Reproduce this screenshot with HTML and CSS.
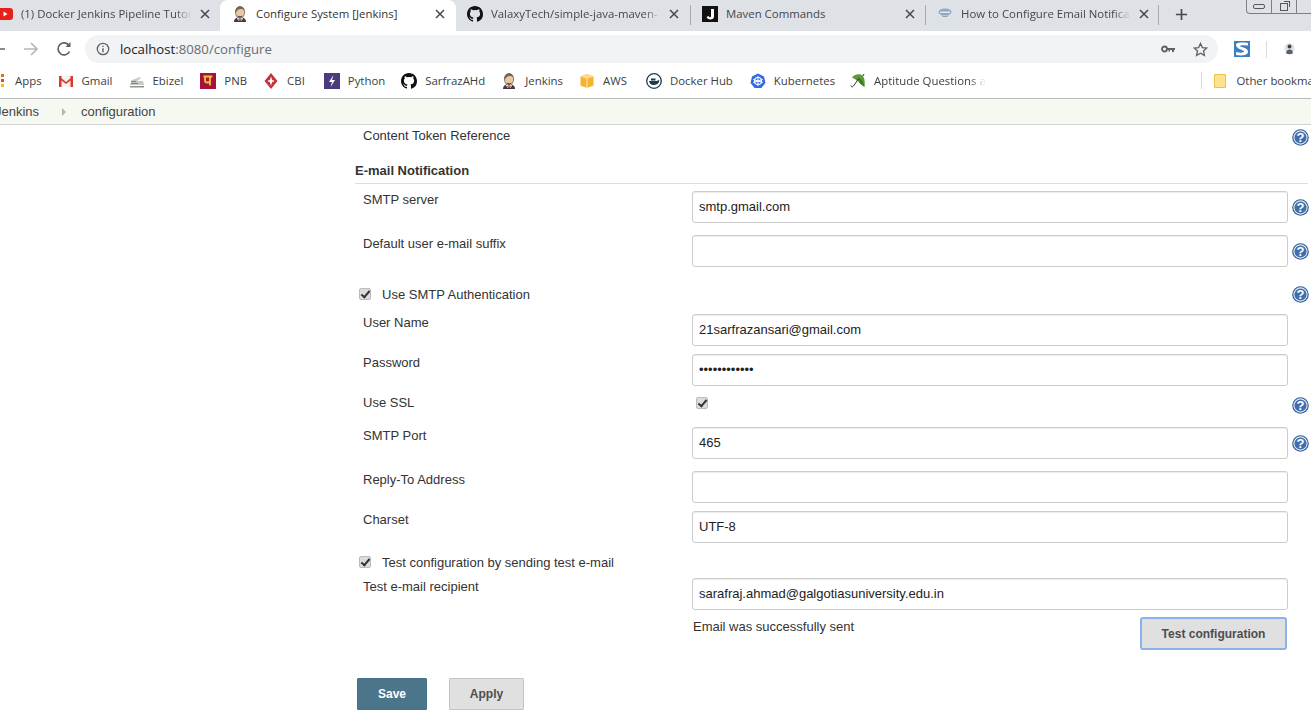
FILE: index.html
```html
<!DOCTYPE html>
<html lang="en">
<head>
    <meta charset="UTF-8">
    <meta name="viewport" content="width=device-width, initial-scale=1.0">
    <title>Configure System [Jenkins]</title>
    <link rel="stylesheet" href="styles.css">
</head>
<body>
    <svg class="defs" width="0" height="0">
        <symbol id="i-github" viewBox="0 0 16 16">
            <path fill="#111" d="M8 0C3.58 0 0 3.58 0 8c0 3.54 2.29 6.53 5.47 7.59.4.07.55-.17.55-.38v-1.34c-2.23.48-2.7-1.07-2.7-1.07-.36-.92-.89-1.17-.89-1.17-.73-.5.05-.49.05-.49.8.06 1.23.83 1.23.83.71 1.22 1.87.87 2.33.66.07-.52.28-.87.51-1.07-1.78-.2-3.64-.89-3.64-3.95 0-.87.31-1.59.82-2.15-.08-.2-.36-1.02.08-2.12 0 0 .67-.21 2.2.82A7.6 7.6 0 0 1 8 3.9c.68 0 1.36.09 2 .27 1.53-1.04 2.2-.82 2.2-.82.44 1.1.16 1.92.08 2.12.51.56.82 1.27.82 2.15 0 3.07-1.87 3.75-3.65 3.95.29.25.54.73.54 1.48v2.2c0 .21.15.46.55.38A8 8 0 0 0 16 8c0-4.42-3.58-8-8-8z"/>
        </symbol>
        <symbol id="i-jenkins" viewBox="0 0 16 16">
            <path fill="#3d3a3a" d="M2 16c0-2.500 1.500-4 3.500-4.500h5c2 .5 3.500 2 3.500 4.500z"/>
            <path fill="#e9c9a6" stroke="#5b4a3e" stroke-width=".7" d="M3.500 6c0-3.500 2-5.500 4.500-5.500S12.500 2.500 12.500 6c0 3.500-2 6.500-4.500 6.500S3.500 9.500 3.500 6z"/>
            <path fill="#6e665f" d="M3.500 6.500C3 3 5.500.4 8 .4c2.300 0 4 1.300 4.500 3.600-2.500-1.500-5-1.500-6.800 0-.7.8-.9 1.800-2.200 2.500z"/>
            <path fill="#5b4a3e" d="M5.500 9.500c1.500 1 3.500 1 5 0-.3 1.600-1.300 2.500-2.500 2.500s-2.200-.9-2.500-2.500z"/>
            <path fill="#fff" d="M4.800 12.300l1.700 2.700 1.500-1.300 1.500 1.300 1.700-2.700-1.700-.3-1.500.9-1.500-.9z"/>
            <path fill="#b3262a" d="M6.300 12.700l1.700.8 1.700-.8v1.800L8 13.800l-1.700.7z"/>
        </symbol>
        <symbol id="i-help" viewBox="0 0 17 17">
            <circle cx="8.500" cy="8.500" r="8.300" fill="#2c5c98"/>
            <circle cx="8.500" cy="8.500" r="6.600" fill="#3f6fab" stroke="#e3ebf5" stroke-width="1.100"/>
            <text x="8.500" y="13" text-anchor="middle" class="help-mark">?</text>
        </symbol>
        <symbol id="i-close" viewBox="0 0 10 10">
            <path stroke="#45474a" stroke-width="1.500" d="M1 1l8 8M9 1l-8 8"/>
        </symbol>
    </svg>

    <div class="tabstrip">
        <div class="tab tab-first">
            <svg class="favicon" viewBox="0 0 16 16"><rect y="2" width="16" height="12" rx="3" fill="#e62117"/><path fill="#fff" d="M6.500 5.500v5l4-2.500z"/></svg>
            <span class="tab-title">(1) Docker Jenkins Pipeline Tutor</span>
            <svg class="tab-close"><use href="#i-close"/></svg>
        </div>
        <div class="tab tab-active">
            <svg class="favicon"><use href="#i-jenkins"/></svg>
            <span class="tab-title">Configure System [Jenkins]</span>
            <svg class="tab-close"><use href="#i-close"/></svg>
        </div>
        <div class="tab tab-third">
            <svg class="favicon"><use href="#i-github"/></svg>
            <span class="tab-title">ValaxyTech/simple-java-maven-</span>
            <svg class="tab-close"><use href="#i-close"/></svg>
        </div>
        <div class="tab tab-fourth">
            <span class="tab-sep"></span>
            <svg class="favicon" viewBox="0 0 16 16"><rect width="16" height="16" fill="#111"/><path fill="#fff" d="M9 3h3v7.500c0 2-1.500 3-3.500 3S5 12.500 4.500 11l2.300-1c.2.800.7 1.300 1.300 1.300.6 0 .9-.4.900-1.100z"/></svg>
            <span class="tab-title">Maven Commands</span>
            <svg class="tab-close"><use href="#i-close"/></svg>
        </div>
        <div class="tab tab-last">
            <span class="tab-sep"></span>
            <svg class="favicon" viewBox="0 0 16 16"><ellipse cx="8" cy="6" rx="6.500" ry="3.500" fill="#8fa9c4"/><path fill="#dfe6ee" d="M3 5.500h10v1.500H3z"/><path fill="#7b8fa5" d="M4 9c2 1.500 6 1.500 8 0-1 2.500-7 2.500-8 0z"/></svg>
            <span class="tab-title">How to Configure Email Notifica</span>
            <svg class="tab-close"><use href="#i-close"/></svg>
            <span class="tab-sep tab-sep-end"></span>
        </div>
        <svg class="new-tab" viewBox="0 0 14 14"><path stroke="#45474a" stroke-width="1.800" d="M7 1v12M1 7h12"/></svg>
        <div class="win-buttons">
            <span class="win-btn"><i class="win-min"></i></span>
            <span class="win-btn"><i class="win-max"></i></span>
            <span class="win-btn win-btn-end"></span>
        </div>
    </div>

    <div class="toolbar">
        <svg class="nav-icon nav-back" viewBox="0 0 16 16"><path stroke="#5f6368" stroke-width="1.700" fill="none" d="M15 8H2M8 2L2 8l6 6"/></svg>
        <svg class="nav-icon nav-forward" viewBox="0 0 16 16"><path stroke="#b4b6b9" stroke-width="1.700" fill="none" d="M1 8h13M8 2l6 6-6 6"/></svg>
        <svg class="nav-icon" viewBox="0 0 16 16"><path stroke="#5f6368" stroke-width="1.700" fill="none" d="M13.500 10.500A6 6 0 1 1 13 4.500"/><path fill="#5f6368" d="M14.500 1v5h-5z"/></svg>
        <div class="omnibox">
            <svg class="omni-info" viewBox="0 0 14 14"><circle cx="7" cy="7" r="5.700" fill="none" stroke="#5f6368" stroke-width="1.300"/><path fill="#5f6368" d="M6.300 6.200h1.400v4H6.300zM6.300 3.700h1.400v1.400H6.300z"/></svg>
            <span class="url"><b>localhost</b>:8080/configure</span>
            <svg class="omni-key" viewBox="0 0 14 8"><circle cx="3.500" cy="4" r="2.500" fill="none" stroke="#5f6368" stroke-width="1.800"/><path fill="#5f6368" d="M6 3h8v2h-1v2h-2V5H9v1.500H7.500V5H6z"/></svg>
            <svg class="omni-star" viewBox="0 0 16 16"><path fill="none" stroke="#5f6368" stroke-width="1.400" d="M8 1.500l2 4.400 4.700.5-3.500 3.200 1 4.700L8 11.900l-4.200 2.400 1-4.700L1.300 6.400 6 5.900z"/></svg>
        </div>
        <svg class="ext-s" viewBox="0 0 16 16"><rect width="16" height="16" fill="#3a7fc0"/><path fill="#fff" d="M2 4c0-2 3-3 12-2v2.500C9 4 6 4 6 5c0 1.500 8 1 8 6 0 3-5 4-12 3v-3c4 1 8 1 8-.5S2 8 2 4z"/></svg>
        <span class="toolbar-sep"></span>
        <svg class="avatar" viewBox="0 0 12 14"><circle cx="6" cy="6" r="6" fill="#dde3ea"/><circle cx="6" cy="4" r="2.300" fill="#4a3c3c"/><path fill="#5d6066" d="M2 12c0-3 1.500-4.500 4-4.500s4 1.500 4 4.500c-2 1.500-6 1.500-8 0z"/></svg>
    </div>

    <div class="bookmarks">
        <span class="apps-dots"></span>
        <span class="bm">Apps</span>
        <span class="bm">
            <svg class="bm-icon" viewBox="0 0 16 16"><path fill="#f3f3f3" d="M1 3h14v11H1z"/><path fill="#d93a2e" d="M1 3h2.500v11H1zM12.500 3H15v11h-2.500zM1 3l7 6 7-6v2.500L8 11 1 5.500z"/></svg>
            Gmail
        </span>
        <span class="bm">
            <svg class="bm-icon" viewBox="0 0 16 16"><path fill="#c6cbc6" d="M1 12l2-5 8-3 1 1-4 3h6l1 4z"/><path fill="#7e837f" d="M2 8h5v1H2zM2 10h7v1H2z"/><path fill="#8f948f" d="M1 13h14v1.500H1z"/></svg>
            Ebizel
        </span>
        <span class="bm bm-pnb">
            <svg class="bm-icon" viewBox="0 0 16 16"><rect width="16" height="16" fill="#a5123f"/><path fill="none" stroke="#f5c42c" stroke-width="1.800" d="M3.500 3.500h9M5 3.500v4c0 1.500 1 2 2.500 2s2.500-.5 2.500-2v-4M10 6.500v6"/></svg>
            PNB
        </span>
        <span class="bm">
            <svg class="bm-icon" viewBox="0 0 16 16"><path fill="#c1363e" d="M8 0l6.500 8L8 16 1.500 8z"/><path fill="#fff" d="M8 3.500L9.500 8 8 12.500 6.500 8z"/><path fill="#fff" d="M5 7.300h6v1.400H5z"/></svg>
            CBI
        </span>
        <span class="bm bm-python">
            <svg class="bm-icon" viewBox="0 0 16 16"><rect width="16" height="16" fill="#4b3a7d"/><path fill="#fff" d="M9.500 2L5 9h3l-1.500 5L11 7H8z"/></svg>
            Python
        </span>
        <span class="bm"><svg class="bm-icon"><use href="#i-github"/></svg>SarfrazAHd</span>
        <span class="bm"><svg class="bm-icon"><use href="#i-jenkins"/></svg>Jenkins</span>
        <span class="bm">
            <svg class="bm-icon" viewBox="0 0 16 16"><path fill="#f7b32b" d="M8 1l6.500 2.500v9L8 15l-6.500-2.500v-9z"/><path fill="#fbd98a" d="M8 1l6.500 2.500L8 6 1.500 3.500z"/><path fill="#fff" d="M7.600 6h.8v9h-.8z"/></svg>
            AWS
        </span>
        <span class="bm bm-docker">
            <svg class="bm-icon" viewBox="0 0 16 16"><circle cx="8" cy="8" r="7.300" fill="#fff" stroke="#1f3a4d" stroke-width="1.300"/><path fill="#1f3a4d" d="M3 8h8c.5-1 1.500-1 2.500-.5C13 10.500 10.500 12 7.500 12 5 12 3.500 10.500 3 8z"/><path fill="#1f3a4d" d="M5 5.500h4.500v2H5z"/></svg>
            Docker Hub
        </span>
        <span class="bm bm-kube">
            <svg class="bm-icon" viewBox="0 0 16 16"><path fill="#326ce5" d="M8 .5l6 2.900 1.500 6.500-4.100 5.200H4.600L.5 9.900 2 3.400z"/><circle cx="8" cy="8" r="3.500" fill="none" stroke="#fff" stroke-width="1.100"/><path stroke="#fff" stroke-width="1" d="M8 3v10M3.200 6.500l9.600 3M12.800 6.500l-9.600 3"/></svg>
            Kubernetes
        </span>
        <span class="bm">
            <svg class="bm-icon" viewBox="0 0 16 16"><path fill="#5f9a32" d="M2 4.500C5 .5 11 .5 13 3c2 3 2 7 1.500 11-1.500-2-3-3-4.500-3.500C8.500 8 5 6 2 4.500z"/><path fill="#3f7a20" d="M8 5l2 5.500 4.500 3.500C14 10 12 6 8 5z"/><path stroke="#333" stroke-width="1" fill="none" d="M9 5l-5.500 8c-1 1.500-2.500 1-2.500-.5M13 3l1-2"/></svg>
            <span class="bm-clip">Aptitude Questions a</span>
        </span>
        <span class="bm-right">
            <span class="toolbar-sep"></span>
            <svg class="folder" viewBox="0 0 12 14"><path fill="#fde28e" stroke="#efc04e" d="M.5.500h11v13H.5z"/></svg>
            Other bookmarks
        </span>
    </div>

    <div class="breadcrumbs">
        <span class="crumb">Jenkins</span>
        <span class="crumb-arrow"></span>
        <span class="crumb">configuration</span>
    </div>

    <form class="config">
        <div class="row row-token">
            <div class="label">Content Token Reference</div>
            <div></div>
            <svg class="help help-token"><use href="#i-help"/></svg>
        </div>

        <div class="section-head">E-mail Notification</div>

        <div class="row row-gap12">
            <label class="label">SMTP server</label>
            <input class="field" type="text" value="smtp.gmail.com">
            <svg class="help"><use href="#i-help"/></svg>
        </div>
        <div class="row row-gap12">
            <label class="label">Default user e-mail suffix</label>
            <input class="field" type="text">
            <svg class="help"><use href="#i-help"/></svg>
        </div>
        <div class="row row-check">
            <label class="check-label"><input class="check" type="checkbox" checked> Use SMTP Authentication</label>
            <svg class="help help-check"><use href="#i-help"/></svg>
        </div>
        <div class="row row-gap8">
            <label class="label">User Name</label>
            <input class="field" type="text" value="21sarfrazansari@gmail.com">
        </div>
        <div class="row">
            <label class="label">Password</label>
            <input class="field" type="password" value="abcdefghijkl">
        </div>
        <div class="row row-ssl">
            <label class="label">Use SSL</label>
            <div><input class="check check-ssl" type="checkbox" checked></div>
            <svg class="help help-ssl"><use href="#i-help"/></svg>
        </div>
        <div class="row row-gap12">
            <label class="label">SMTP Port</label>
            <input class="field" type="text" value="465">
            <svg class="help"><use href="#i-help"/></svg>
        </div>
        <div class="row row-gap8">
            <label class="label">Reply-To Address</label>
            <input class="field" type="text">
        </div>
        <div class="row">
            <label class="label">Charset</label>
            <input class="field" type="text" value="UTF-8">
        </div>
        <div class="row row-check row-check-test">
            <label class="check-label"><input class="check" type="checkbox" checked> Test configuration by sending test e-mail</label>
        </div>
        <div class="row row-gap7">
            <label class="label">Test e-mail recipient</label>
            <input class="field" type="text" value="sarafraj.ahmad@galgotiasuniversity.edu.in">
        </div>
        <div class="row">
            <div></div>
            <div class="test-status">
                <span class="status-text">Email was successfully sent</span>
                <button class="btn btn-test" type="button">Test configuration</button>
            </div>
        </div>
        <div class="actions">
            <button class="btn btn-save" type="button">Save</button>
            <button class="btn btn-apply" type="button">Apply</button>
        </div>
    </form>
</body>
</html>
```

FILE: styles.css
```css
html, body {
    margin: 0;
    height: 719px;
    overflow: hidden;
    background: #fff;
}
body {
    font-family: "Liberation Sans", Arial, sans-serif;
    font-size: 13px;
    color: #333;
}
.defs {
    display: block;
    height: 0;
}
.help-mark {
    font-family: "Liberation Sans", Arial, sans-serif;
    font-size: 13px;
    font-weight: bold;
    fill: #fff;
}

/* tabs */
.tabstrip {
    display: flex;
    align-items: flex-start;
    height: 31px;
    margin-left: -11px;
    background: #dee1e6;
    font-family: "Open Sans", "Noto Sans", sans-serif;
    font-size: 11.4px;
    color: #45474a;
    position: relative;
}
.tab {
    display: flex;
    align-items: center;
    box-sizing: border-box;
    width: 234px;
    height: 31px;
    padding: 0 11px 4px 11px;
    flex: none;
    position: relative;
}
.tab-first {
    width: 231px;
    padding-left: 8px;
    padding-right: 10px;
}
.tab-active {
    width: 236px;
    padding-left: 12px;
    background: #fff;
    border-radius: 8px 8px 0 0;
    color: #333;
}
.tab-fourth {
    width: 235px;
    padding: 0 10px 4px 12px;
}
.tab-last {
    padding: 0 10px 4px 12px;
}
.tab-sep {
    position: absolute;
    left: 0;
    top: 5px;
    width: 1px;
    height: 20px;
    background: #a6a9ad;
}
.tab-sep-end {
    left: auto;
    right: 0;
}
.favicon {
    width: 16px;
    height: 16px;
    flex: none;
    margin-right: 8px;
}
.tab-title {
    flex: 1;
    white-space: nowrap;
    overflow: hidden;
    -webkit-mask-image: linear-gradient(to right, #000 90%, transparent);
    mask-image: linear-gradient(to right, #000 90%, transparent);
}
.tab-active .tab-title,
.tab-fourth .tab-title {
    -webkit-mask-image: none;
    mask-image: none;
}
.tab-close {
    width: 10px;
    height: 10px;
    flex: none;
    margin-left: 8px;
}
.new-tab {
    width: 13px;
    height: 13px;
    margin: 8px 0 0 16px;
    flex: none;
}
.win-buttons {
    position: absolute;
    top: 0;
    right: 0;
    display: flex;
    height: 13px;
    border: 1px solid #7d7f83;
    border-top: none;
    border-right: none;
    border-radius: 0 0 0 4px;
}
.win-btn {
    display: flex;
    align-items: center;
    justify-content: center;
    width: 24px;
    border-right: 1px solid #7d7f83;
}
.win-btn-end {
    width: 14px;
    border-right: none;
}
.win-min {
    display: block;
    width: 10px;
    height: 3px;
    border: 1px solid #55575a;
    border-radius: 2px;
}
.win-max {
    display: block;
    width: 6px;
    height: 6px;
    border: 1px solid #55575a;
    box-shadow: 2px -2px 0 -1px #dee1e6, 3px -3px 0 -1px #55575a;
}

/* address bar */
.toolbar {
    display: flex;
    align-items: center;
    box-sizing: border-box;
    height: 32px;
    padding-top: 4px;
    background: #fff;
}
.nav-icon {
    width: 16px;
    height: 16px;
    flex: none;
    margin-right: 17px;
}
.nav-back {
    margin-left: -10px;
}
.omnibox {
    display: flex;
    align-items: center;
    width: 1133px;
    height: 28px;
    margin-left: -4px;
    padding-left: 11px;
    box-sizing: border-box;
    background: #f1f3f4;
    border-radius: 14px;
    flex: none;
}
.omni-info {
    width: 14px;
    height: 14px;
    margin-right: 10px;
}
.url {
    flex: 1;
    font-family: "Open Sans", "Noto Sans", sans-serif;
    font-size: 13.2px;
    color: #6a6d70;
}
.url b {
    font-weight: normal;
    color: #202124;
}
.omni-key {
    width: 14px;
    height: 8px;
    margin-right: 18px;
}
.omni-star {
    width: 15px;
    height: 15px;
    margin-right: 10px;
}
.ext-s {
    width: 16px;
    height: 16px;
    margin-left: 16px;
    flex: none;
}
.toolbar-sep {
    display: block;
    width: 1px;
    height: 17px;
    background: #d8dadd;
    margin-left: 16px;
    flex: none;
}
.avatar {
    width: 11px;
    height: 12px;
    margin-left: 17px;
    flex: none;
}

/* bookmarks */
.bookmarks {
    display: flex;
    align-items: center;
    height: 35px;
    border-bottom: 1px solid #b9b9b9;
    font-family: "Open Sans", "Noto Sans", sans-serif;
    font-size: 11.4px;
    color: #3c4043;
    white-space: nowrap;
    gap: 16px;
}
.apps-dots {
    display: block;
    width: 3px;
    height: 3px;
    margin: 0 -5px 0 1px;
    background: #ea4335;
    box-shadow: 0 5px 0 #fbbc05, 0 -5px 0 #e8710a;
    flex: none;
}
.bm {
    display: flex;
    align-items: center;
    gap: 8px;
    flex: none;
}
.bm-pnb {
    margin-left: 1px;
}
.bm-python {
    margin-left: 3px;
}
.bm-docker {
    margin-left: 3px;
}
.bm-kube {
    margin: 0 -1px 0 1px;
}
.bm-icon {
    width: 16px;
    height: 16px;
    flex: none;
}
.bm-clip {
    display: block;
    width: 112px;
    overflow: hidden;
    -webkit-mask-image: linear-gradient(to right, #000 85%, transparent);
    mask-image: linear-gradient(to right, #000 85%, transparent);
}
.bm-right {
    display: flex;
    align-items: center;
    margin-left: auto;
    margin-right: -19px;
    flex: none;
}
.bm-right .toolbar-sep {
    margin: 0 12px 0 0;
}
.folder {
    width: 12px;
    height: 14px;
    margin-right: 10px;
}

/* breadcrumb */
.breadcrumbs {
    display: flex;
    align-items: center;
    height: 25px;
    margin-left: -5px;
    background: #f6f9f2;
    border-bottom: 1px solid #d3d3d3;
    color: #444;
}
.crumb-arrow {
    width: 0;
    height: 0;
    margin: 0 15px 0 23px;
    border-left: 4px solid #b5b5b5;
    border-top: 4px solid transparent;
    border-bottom: 4px solid transparent;
}

/* form */
.config {
    padding: 2px 3px 0 355px;
}
.row {
    display: grid;
    grid-template-columns: 337px 596px 20px;
    align-items: start;
}
.row-gap12 {
    margin-bottom: 12px;
}
.row-gap8 {
    margin-bottom: 8px;
}
.row-gap7 {
    margin-bottom: 7px;
}
.row-token {
    height: 16px;
}
.label {
    padding: 1px 0 0 8px;
    line-height: 16px;
    display: block;
}
.section-head {
    margin: 19px 0 7px;
    height: 21px;
    line-height: 17px;
    border-bottom: 1px solid #ddd;
    font-weight: bold;
}
.field {
    box-sizing: border-box;
    width: 596px;
    height: 32px;
    padding: 0 6px 2px;
    border: 1px solid #ccc;
    border-radius: 3px;
    box-shadow: inset 0 1px 1px rgba(0, 0, 0, 0.075);
    font-family: "Liberation Sans", Arial, sans-serif;
    font-size: 13px;
    color: #222;
    background: #fff;
}
.help {
    width: 17px;
    height: 17px;
    margin: 8px 0 0 4px;
    display: block;
}
.help-token {
    margin-top: 2px;
}
.row-check {
    height: 35px;
    grid-template-columns: 933px 20px;
}
.check-label {
    display: flex;
    align-items: center;
    gap: 11px;
    height: 16px;
    margin-top: 7px;
    padding-left: 4px;
}
.help-check {
    margin-top: 7px;
}
.check {
    appearance: none;
    -webkit-appearance: none;
    box-sizing: border-box;
    width: 12px;
    height: 12px;
    margin: 0;
    border-radius: 2px;
    border: 1px solid #bbb;
    background: #dcdcdc;
    position: relative;
    flex: none;
}
.check::after {
    content: "";
    position: absolute;
    left: 3px;
    top: 0;
    width: 3px;
    height: 7px;
    border: solid #333;
    border-width: 0 2px 2px 0;
    transform: rotate(40deg);
}
.row-ssl {
    height: 41px;
}
.row-ssl .label {
    margin-top: 8px;
}
.check-ssl {
    margin: 11px 0 0 4px;
    display: block;
}
.help-ssl {
    margin-top: 11px;
}
.row-check-test .check-label {
    margin-top: 11px;
}
.test-status {
    display: flex;
    justify-content: space-between;
    align-items: flex-start;
    height: 33px;
    padding: 0 1px;
}
.status-text {
    margin-top: 1px;
    line-height: 17px;
}
.btn {
    box-sizing: border-box;
    height: 32px;
    padding: 0;
    border: 1px solid #c4c4c4;
    background: #e0e0e0;
    color: #4d4d4d;
    font-family: "Liberation Sans", Arial, sans-serif;
    font-size: 12px;
    font-weight: bold;
    border-radius: 1px;
}
.btn-test {
    width: 147px;
    height: 33px;
    border: 2px solid #8ab0ee;
    border-radius: 3px;
}
.actions {
    display: flex;
    gap: 22px;
    margin: 28px 0 0 2px;
}
.btn-save {
    width: 70px;
    background: #4b758b;
    border-color: #47708a;
    color: #fff;
}
.btn-apply {
    width: 75px;
}
```
